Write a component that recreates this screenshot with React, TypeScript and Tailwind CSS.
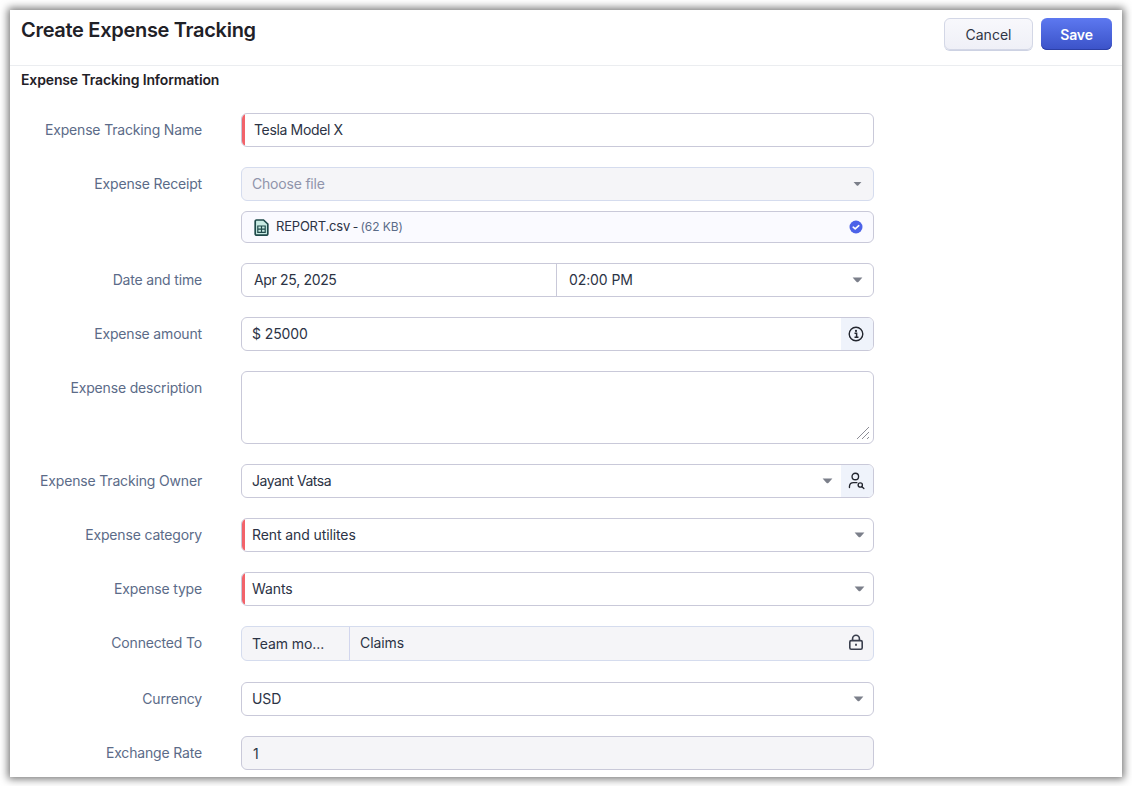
import type { ReactNode } from 'react';

const fieldBase = 'h-[34px] w-full rounded-[6px] border flex items-center text-[14px] text-[#2c3345] tracking-[-0.1px]';
const borderNormal = 'border-[#c9c9d9]';
const borderSoft = 'border-[#d5dcee]';

function Caret({ className = '' }: { className?: string }) {
  return (
    <svg width="11" height="6" viewBox="0 0 11 6" className={className}>
      <path d="M0.6 0.6h9.8L6.4 4.9q-.9.8-1.8 0z" fill="#7b7f8a" />
    </svg>
  );
}

function Row({ label, children, className = 'mt-[20px]' }: { label: string; children: ReactNode; className?: string }) {
  return (
    <div className={`flex ${className}`}>
      <div className="w-[181px] shrink-0 pt-[8px] text-right text-[14px] leading-[18px] tracking-[-0.17px] text-[#5b6b88]">{label}</div>
      <div className="ml-[39px] w-[633px] shrink-0">{children}</div>
    </div>
  );
}

function Mandatory({ children }: { children: ReactNode }) {
  return (
    <div className={`${fieldBase} ${borderNormal} relative overflow-hidden bg-white pl-[10px] pr-[8px]`}>
      <span className="absolute left-0 top-0 h-full w-[3px] bg-[#f2636a]" />
      {children}
    </div>
  );
}

function SelectMandatory({ text }: { text: string }) {
  return (
    <Mandatory>
      <span className="flex-1 -translate-y-px">{text}</span>
      <Caret />
    </Mandatory>
  );
}

export default function App() {
  return (
    <div className="h-[786px] w-[1132px] overflow-hidden bg-white pl-[10px] pt-[10px] font-['Inter',sans-serif]">
      <div className="h-[767px] w-[1112px] overflow-hidden bg-white shadow-[0_0_8px_2px_rgba(0,0,0,0.55)]">
        <header className="flex h-[56px] border-b border-[#ebedf0] pl-[11px] pr-[10px]">
          <h1 className="flex-1 pt-[6px] text-[20px] font-semibold leading-[28px] tracking-[-0.3px] text-[#1f2127]">Create Expense Tracking</h1>
          <div className="flex gap-[8px] pt-[8px]">
            <button className="h-[32px] w-[89px] rounded-[6px] border border-[#d3d7e6] bg-gradient-to-b from-[#f8f8fc] to-[#eff0f7] text-[14px] text-[#2f3444] shadow-[0_1px_0_#cdd2e3]">Cancel</button>
            <button className="h-[32px] w-[71px] rounded-[6px] bg-gradient-to-b from-[#5d78f0] to-[#3b52c8] text-[14px] font-semibold tracking-[-0.1px] text-white shadow-[inset_0_-1px_0_#2c3fa6]">Save</button>
          </div>
        </header>

        <section className="pl-[11px]">
          <h2 className="pt-[5px] text-[14px] font-semibold leading-[18px] tracking-[-0.14px] text-[#1f2127]">Expense Tracking Information</h2>

          <Row label="Expense Tracking Name" className="mt-[24px]">
            <Mandatory>
              <span className="-translate-y-px pl-[2px] tracking-[-0.35px]">Tesla Model X</span>
            </Mandatory>
          </Row>

          <Row label="Expense Receipt">
            <div className={`${fieldBase} ${borderSoft} bg-[#f5f5f8] pl-[10px] pr-[10px]`}>
              <span className="flex-1 -translate-y-px tracking-[-0.2px] text-[#9094ab]">Choose file</span>
              <Caret className="scale-[0.8]" />
            </div>
            <div className="mt-[10px] flex h-[32px] items-center rounded-[6px] border border-[#c9c9d9] bg-[#fafaff] pl-[12px] pr-[10px] text-[12px] text-[#2c3345]">
              <svg width="15" height="17" viewBox="0 0 15 17" className="mr-[7px] shrink-0">
                <path d="M2.5 1h7L13.8 5v10a1.2 1.2 0 0 1-1.2 1.2H2.5A1.2 1.2 0 0 1 1.2 15V2.2A1.2 1.2 0 0 1 2.5 1z" fill="#c8ebe3" stroke="#1f4a4a" strokeWidth="1.7" />
                <path d="M3.8 7h7.4v6.4H3.8zM3.8 10.2h7.4M7.5 7v6.4" fill="none" stroke="#1f4a4a" strokeWidth="1.2" />
              </svg>
              <span className="flex-1">
                <span className="text-[13px] tracking-[-0.2px]">REPORT.csv</span>
                <span className="tracking-[-0.6px]"> - </span>
                <span className="tracking-[-0.1px] text-[#5b6b88]">(62 KB)</span>
              </span>
              <svg width="14" height="14" viewBox="0 0 14 14">
                <circle cx="7" cy="7" r="6.5" fill="#4c62e8" />
                <path d="M4.2 7.2l2 1.7 3.6-3.2" fill="none" stroke="#fff" strokeWidth="1.6" strokeLinecap="round" strokeLinejoin="round" />
              </svg>
            </div>
          </Row>

          <Row label="Date and time">
            <div className={`${fieldBase} ${borderNormal} bg-white`}>
              <span className="flex h-full w-[315px] items-center border-r border-[#c9c9d9] pb-[1px] pl-[12px] tracking-[-0.33px]">Apr 25, 2025</span>
              <span className="flex-1 -translate-y-px pl-[12px]">02:00 PM</span>
              <Caret className="mr-[10px]" />
            </div>
          </Row>

          <Row label="Expense amount">
            <div className={`${fieldBase} ${borderNormal} overflow-hidden bg-white pl-[10px]`}>
              <span className="flex-1 -translate-y-px">$ 25000</span>
              <span className="flex h-full w-[32px] items-center justify-center bg-[#eff3fb] pr-[2px]">
                <svg width="16" height="16" viewBox="0 0 16 16">
                  <circle cx="8" cy="8" r="6.8" fill="none" stroke="#23262f" strokeWidth="1.4" />
                  <circle cx="8" cy="4.9" r="1.1" fill="#23262f" />
                  <path d="M6.5 7.2H8.6V11M6.5 11.2h4" fill="none" stroke="#23262f" strokeWidth="1.5" />
                </svg>
              </span>
            </div>
          </Row>

          <Row label="Expense description">
            <div className="relative h-[73px] rounded-[6px] border border-[#c9c9d9] bg-white">
              <svg width="14" height="14" viewBox="0 0 14 14" className="absolute bottom-[3px] right-[3px]">
                <path d="M1 13L13 1M6 13L13 6M11 13L13 11" stroke="#8d8d96" strokeWidth="1" />
              </svg>
            </div>
          </Row>

          <Row label="Expense Tracking Owner">
            <div className={`${fieldBase} ${borderNormal} overflow-hidden bg-white pl-[10px]`}>
              <span className="flex-1 -translate-y-px tracking-[-0.45px]">Jayant Vatsa</span>
              <Caret className="mr-[8px]" />
              <span className="flex h-full w-[32px] items-center justify-center bg-[#eff3fb]">
                <svg width="18" height="18" viewBox="1.5 1 16 16" fill="none" stroke="#23262f" strokeWidth="1.2">
                  <circle cx="8" cy="5" r="2.9" />
                  <path d="M2.8 14.8v-1a3.6 3.6 0 0 1 3.6-3.4h3" strokeLinecap="round" />
                  <circle cx="12.4" cy="12.6" r="1.9" />
                  <path d="M13.9 14.1l1.7 1.6" strokeLinecap="round" />
                </svg>
              </span>
            </div>
          </Row>

          <Row label="Expense category">
            <SelectMandatory text="Rent and utilites" />
          </Row>

          <Row label="Expense type">
            <SelectMandatory text="Wants" />
          </Row>

          <Row label="Connected To">
            <div className={`${fieldBase} ${borderSoft} h-[35px] bg-[#f5f5f8]`}>
              <span className="flex h-full w-[108px] items-center border-r border-[#d2d6ee] pl-[10px]">Team mo...</span>
              <span className="flex-1 -translate-y-px pl-[10px]">Claims</span>
              <svg width="16" height="17" viewBox="0 0 16 17" fill="none" stroke="#3a3f4e" strokeWidth="1.6" className="mr-[9px] -translate-y-px">
                <rect x="1.8" y="6.6" width="12.4" height="8.6" rx="1.4" />
                <path d="M4.6 6.4V4.6a3.4 3.4 0 0 1 6.8 0v1.8" />
                <path d="M8 9.8v2" strokeWidth="1.8" />
              </svg>
            </div>
          </Row>

          <Row label="Currency" className="mt-[21px]">
            <div className={`${fieldBase} ${borderNormal} bg-white pl-[10px] pr-[9px]`}>
              <span className="flex-1 -translate-y-px">USD</span>
              <Caret />
            </div>
          </Row>

          <Row label="Exchange Rate">
            <div className={`${fieldBase} ${borderNormal} bg-[#f5f5f8] pl-[11px]`}>1</div>
          </Row>
        </section>
      </div>
    </div>
  );
}
